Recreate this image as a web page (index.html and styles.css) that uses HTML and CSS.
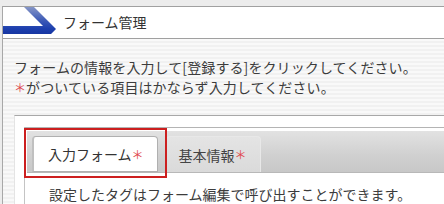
FILE: index.html
```html
<!DOCTYPE html>
<html lang="ja">
<head>
  <meta charset="UTF-8" />
  <title>フォーム管理</title>
  <link rel="stylesheet" href="styles.css">
</head>
<body>
  <div class="page">
    <div class="header">
      <svg class="header-arrow" width="56" height="31" viewBox="0 0 56 31">
        <defs>
          <linearGradient id="arrowGrad" x1="0" y1="0" x2="0" y2="31" gradientUnits="userSpaceOnUse">
            <stop offset="0" stop-color="#8595c6" />
            <stop offset="0.45" stop-color="#3a58b6" />
            <stop offset="0.7" stop-color="#1d3fae" />
            <stop offset="1" stop-color="#112f98" />
          </linearGradient>
        </defs>
        <polygon points="0,19 40,19 21,0 31,0 53,22 48,27 0,27" fill="url(#arrowGrad)" />
      </svg>
      <div class="header-title">フォーム管理</div>
    </div>

    <div class="main">
      <p class="lead">フォームの情報を入力して[登録する]をクリックしてください。</p>
      <p class="lead"><span class="req">＊</span>がついている項目はかならず入力してください。</p>

      <div class="panel">
        <div class="tab-box">
          <div class="tab-bar">
            <div class="tab active">入力フォーム<span class="req">＊</span></div>
            <div class="tab">基本情報<span class="req">＊</span></div>
          </div>
          <div class="tab-content">設定したタグはフォーム編集で呼び出すことができます。</div>
          <div class="highlight"></div>
        </div>
      </div>
    </div>
  </div>
</body>
</html>
```

FILE: styles.css
```css
* {
  box-sizing: border-box;
  margin: 0;
  padding: 0;
}
body {
  font-family: "Noto Sans CJK JP", "Noto Sans", sans-serif;
  background-color: #ececec;
  color: #333;
  font-size: 14px;
  overflow: hidden;
}
.page {
  margin: 6px 0 0 2px;
  border-top: 1px solid #a0a0a0;
  border-left: 1px solid #a8a8a8;
  background: repeating-linear-gradient(#f9f9f9 0, #f9f9f9 2px, #f1f1f1 2px, #f1f1f1 4px);
  height: 198px;
  overflow: hidden;
}
.header {
  height: 32px;
  background-color: #fff;
  border-bottom: 1px solid #a0a0a0;
  display: flex;
  align-items: center;
}
.header-arrow {
  flex-shrink: 0;
  align-self: flex-start;
}
.header-title {
  margin-left: 4px;
  font-size: 14px;
  color: #333;
  margin-top: -1px;
}
.main {
  padding: 18px 0 0 11px;
}
.lead {
  line-height: 20px;
  color: #3c3c3c;
  letter-spacing: 0.1px;
}
.req {
  color: #e0474c;
  font-size: 12px;
}
.panel {
  margin-top: 17px;
  background-color: #fff;
  border-top: 1px solid #a8a8a8;
  border-left: 1px solid #e4e4e4;
  padding: 11px 0 0 9px;
}
.tab-box {
  position: relative;
  border-top: 1px solid #b4b4b4;
  border-left: 1px solid #c4c4c4;
  padding: 3px 0 0 2px;
}
.tab-bar {
  display: flex;
  align-items: flex-end;
  height: 42px;
  padding-left: 5px;
  background: linear-gradient(#e2e2e2, #d0d0d0 60%, #c8c8c8);
  border-bottom: 1px solid #b8b8b8;
}
.tab {
  height: 36px;
  display: flex;
  align-items: center;
  padding: 0 13px 0 12px;
  color: #444;
  border: 1px solid #e8e8e8;
  border-bottom: none;
  border-radius: 4px 4px 0 0;
  background: linear-gradient(#e4e4e4, #dadada);
  margin-right: 8px;
}
.tab.active {
  background-color: #fff;
  background-image: none;
  border: 1px solid #b0b0b0;
  border-left: 2px solid #c0c0c0;
  padding: 0 13px 0 14px;
  color: #333;
}
.tab-content {
  padding: 11px 0 0 22px;
  line-height: 20px;
  color: #3c3c3c;
}
.highlight {
  position: absolute;
  left: -1px;
  top: 0;
  width: 143px;
  height: 50px;
  border: 2px solid #cc1f1f;
}
```
